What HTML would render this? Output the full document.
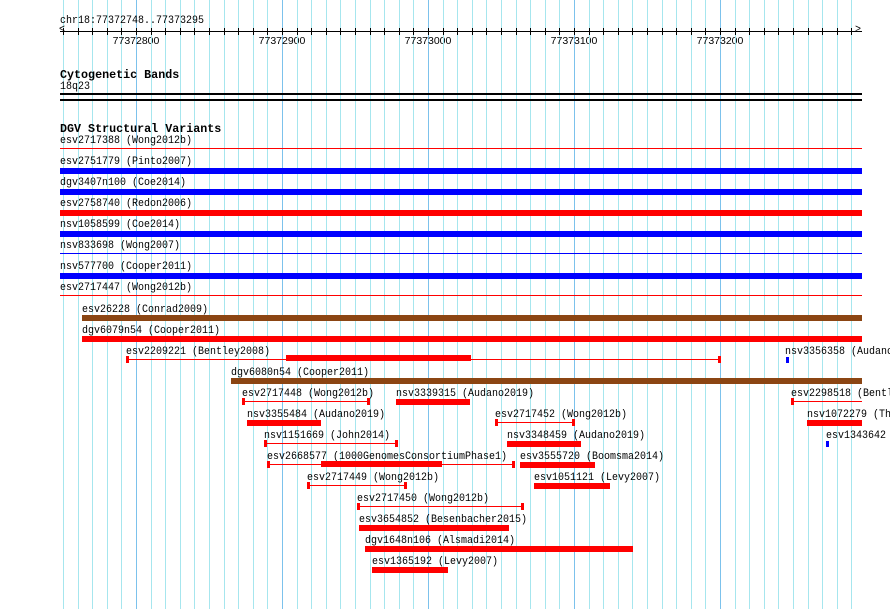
<!DOCTYPE html>
<html><head><meta charset="utf-8"><style>
html,body{margin:0;padding:0;overflow:hidden;width:890px;height:609px;}
body{background:#fff;font-family:"Liberation Mono",monospace;}
#c{position:relative;width:890px;height:609px;overflow:hidden}
.g{position:absolute;top:0;height:609px;width:1px;background:#a6e6ee}
.G{background:#7cc2ec}
.t{position:absolute;font-size:11px;line-height:11px;white-space:pre;color:#000;transform:scaleX(0.909);transform-origin:0 0}
.b{position:absolute;font-size:11.7px;font-weight:bold;line-height:12px;white-space:pre}
.r{position:absolute}
.rl{position:absolute;font-family:"Liberation Sans",sans-serif;font-size:10.5px;line-height:10px;width:60px;text-align:center}
</style></head><body>
<div id="c"></div>
<script>
var h='';
for(var p=77372750;p<=77373290;p+=10){var x=Math.round(60+(p-77372748)*1.46);h+='<div class="g'+(p%100==0?' G':'')+'" style="left:'+x+'px"></div>';
h+='<div class="r" style="left:'+x+'px;top:28px;width:1px;height:7px;background:#000"></div>';
if(p%100==0)h+='<div class="rl" style="left:'+(x-30)+'px;top:36px">'+p+'</div>';}
function R(x,y,w,hh,c){h+='<div class="r" style="left:'+x+'px;top:'+y+'px;width:'+w+'px;height:'+hh+'px;background:'+c+'"></div>';}
function T(x,y,s){h+='<div class="t" style="left:'+x+'px;top:'+(y+1)+'px">'+s+'</div>';}
h+='<div class="t" style="left:60px;top:16px">chr18:77372748..77373295</div>';
R(60,31,802,1,'#000');
h+='<div class="t" style="left:59px;top:25px;font-size:11px">&lt;</div><div class="t" style="left:855px;top:25px;font-size:11px">&gt;</div>';
h+='<div class="b" style="left:60px;top:69px">Cytogenetic Bands</div>';
T(60,81,'18q23');R(60,93,802,2,'#000');R(60,99,802,2,'#000');
h+='<div class="b" style="left:60px;top:123px">DGV Structural Variants</div>';
var RED='#f00',BL='#00f',BR='#8b4513';
var rows=[['esv2717388 (Wong2012b)','l',RED],['esv2751779 (Pinto2007)','b',BL],['dgv3407n100 (Coe2014)','b',BL],['esv2758740 (Redon2006)','b',RED],['nsv1058599 (Coe2014)','b',BL],['nsv833698 (Wong2007)','l',BL],['nsv577700 (Cooper2011)','b',BL],['esv2717447 (Wong2012b)','l',RED]];
for(var i=0;i<rows.length;i++){var y=135+21*i;T(60,y,rows[i][0]);if(rows[i][1]=='b')R(60,y+12,802,6,rows[i][2]);else R(60,y+13,802,1,rows[i][2]);}
function B(x,ly,x2,s,c){T(x,ly,s);R(x,ly+11,x2-x,6,c||RED);}
function L(x,ly,x2,s,c){c=c||RED;T(x,ly,s);R(x,ly+13,x2-x,1,c);R(x,ly+10,3,7,c);if(x2<862)R(x2-3,ly+10,3,7,c);}
B(82,304,862,'esv26228 (Conrad2009)',BR);
B(82,325,862,'dgv6079n54 (Cooper2011)');
L(126,346,721,'esv2209221 (Bentley2008)');R(286,355,185,6,RED);
T(785,346,'nsv3356358 (Audano2019)');R(786,357,3,6,BL);
B(231,367,862,'dgv6080n54 (Cooper2011)',BR);
L(242,388,370,'esv2717448 (Wong2012b)');B(396,388,470,'nsv3339315 (Audano2019)');L(791,388,862,'esv2298518 (Bentley2008)');
B(247,409,321,'nsv3355484 (Audano2019)');L(495,409,575,'esv2717452 (Wong2012b)');B(807,409,862,'nsv1072279 (Thung2014)');
L(264,430,398,'nsv1151669 (John2014)');B(507,430,581,'nsv3348459 (Audano2019)');T(826,430,'esv1343642');R(826,441,3,6,BL);
L(267,451,515,'esv2668577 (1000GenomesConsortiumPhase1)');R(321,461,121,6,RED);B(520,451,595,'esv3555720 (Boomsma2014)');
L(307,472,407,'esv2717449 (Wong2012b)');B(534,472,610,'esv1051121 (Levy2007)');
L(357,493,524,'esv2717450 (Wong2012b)');
B(359,514,509,'esv3654852 (Besenbacher2015)');
B(365,535,633,'dgv1648n106 (Alsmadi2014)');
B(372,556,448,'esv1365192 (Levy2007)');
document.getElementById('c').innerHTML=h;
</script>
</body></html>
